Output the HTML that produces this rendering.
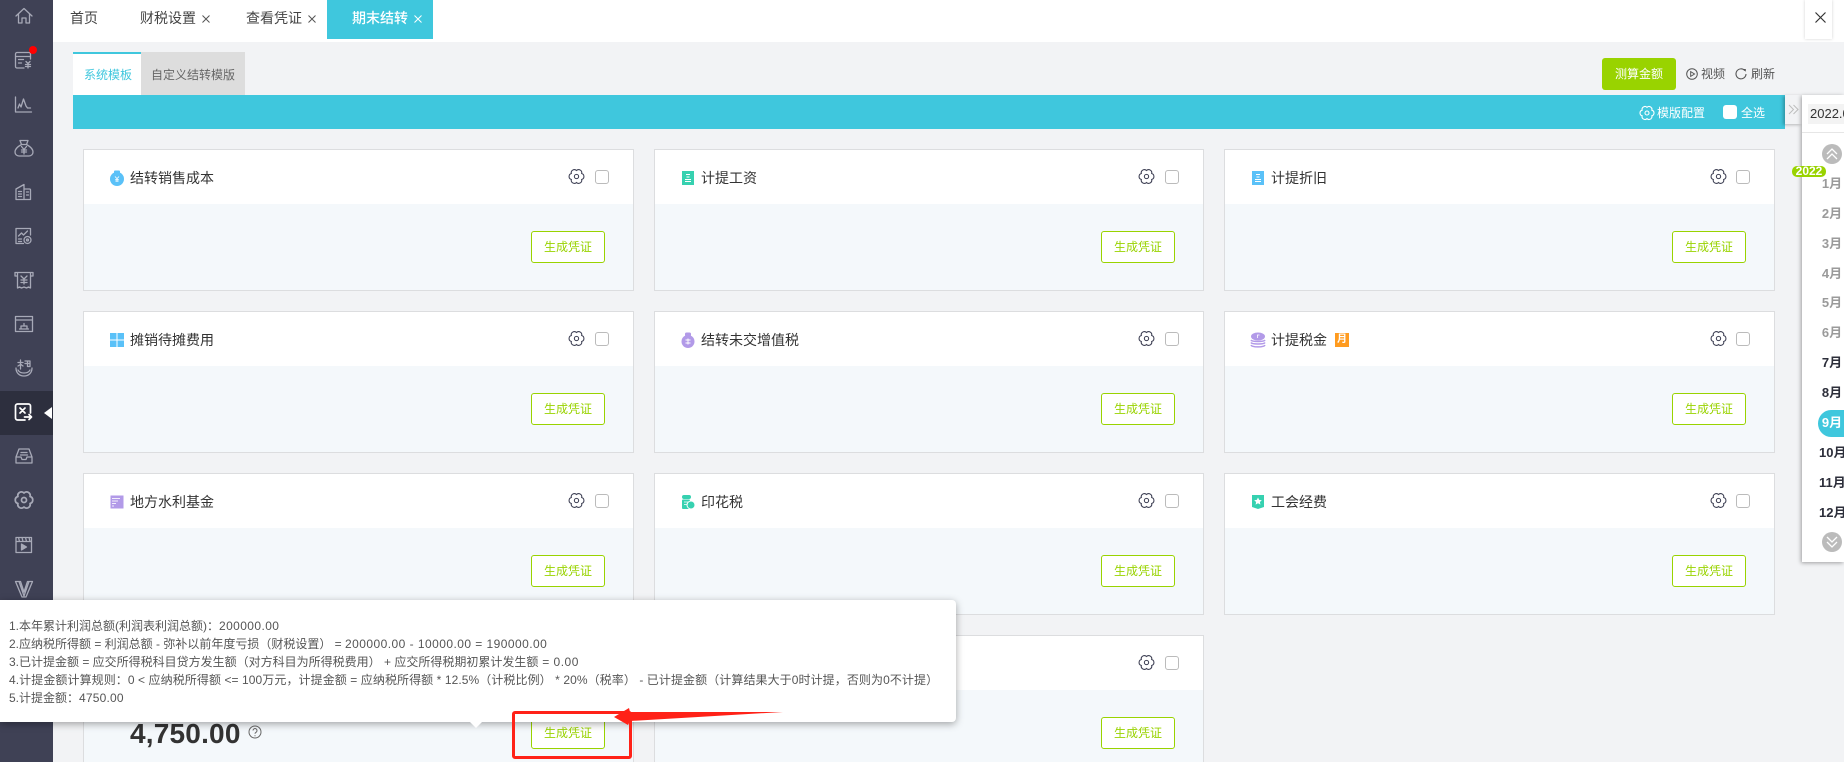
<!DOCTYPE html>
<html lang="zh"><head><meta charset="utf-8"><title>期末结转</title>
<style>
*{box-sizing:border-box}
html,body{margin:0;padding:0;width:1844px;height:762px;overflow:hidden;background:#f2f3f5;font-family:"Liberation Sans","Noto Sans CJK SC",sans-serif;color:#333}
#page{position:relative;width:1844px;height:762px;overflow:hidden;background:#f2f3f5}
.a{position:absolute}
.t{position:absolute;white-space:nowrap;line-height:20px}
#side{left:0;top:0;width:53px;height:762px;background:#3f4155}
#side svg{position:absolute;left:14px;width:20px;height:20px;fill:none;stroke:#a7a9b7;stroke-width:1.3;stroke-linejoin:round;stroke-linecap:round}
.card{position:absolute;width:551px;height:142px;border:1px solid #dcdddf;background:#f4f8fb}
.card .h{position:absolute;left:0;top:0;right:0;height:54px;background:#fff}
.card .n{position:absolute;left:46px;top:18px;font-size:14px;line-height:20px;white-space:nowrap;color:#333}
.card .i{position:absolute;left:25px;top:20px;width:16px;height:16px}
.card .g{position:absolute;right:48px;top:18px;width:17px;height:17px;fill:none;stroke:#3f4155;stroke-width:1}
.card .c{position:absolute;right:24px;top:20px;width:14px;height:14px;border:1px solid #bbb;border-radius:3px;background:#fff}
.card .b{position:absolute;right:28px;top:81px;width:74px;height:32px;border:1px solid #99d300;border-radius:3px;background:#fff;color:#99d300;font-size:12px;line-height:30px;text-align:center}
.c3 .g{right:47px}
.last{height:127px;border-bottom:0}
.m{position:absolute;left:1820px;width:24px;text-align:center;font-size:13px;font-weight:700;line-height:20px;white-space:nowrap}
.w{left:1819px;width:25px;text-align:left;overflow:hidden}
.gr{color:#9a9a9a}.dk{color:#2c2e3a}
.tip{font-size:12px;line-height:18px;color:#555;white-space:nowrap}
.tip i{font-style:normal}
</style></head><body><div id="page">

<!-- top bar -->
<div class="a" style="left:53px;top:0;width:1791px;height:42px;background:#fff"></div>
<div class="a" style="left:327px;top:0;width:106px;height:39px;background:#3fc7dd"></div>
<div class="t" style="left:70px;top:8px;font-size:14px;color:#444">首页</div>
<div class="t" style="left:140px;top:8px;font-size:14px;color:#444">财税设置</div>
<div class="t" style="left:246px;top:8px;font-size:14px;color:#444">查看凭证</div>
<div class="t" style="left:352px;top:8px;font-size:14px;color:#fff;font-weight:500">期末结转</div>
<svg class="a" style="left:202px;top:15px" width="8" height="8" stroke="#555" stroke-width="1"><path d="M.5.5l7 7M7.500.5l-7 7"/></svg>
<svg class="a" style="left:308px;top:15px" width="8" height="8" stroke="#555" stroke-width="1"><path d="M.5.5l7 7M7.500.5l-7 7"/></svg>
<svg class="a" style="left:414px;top:15px" width="8" height="8" stroke="#fff" stroke-width="1"><path d="M.5.5l7 7M7.500.5l-7 7"/></svg>
<div class="a" style="left:1805px;top:0;width:27px;height:39px;background:#fff;box-shadow:0 0 3px rgba(0,0,0,.18)"></div>
<svg class="a" style="left:1815px;top:12px" width="11" height="11" stroke="#333" stroke-width="1.2"><path d="M.5.5l10 10M10.500.5l-10 10"/></svg>

<!-- sub tabs -->
<div class="a" style="left:73px;top:52px;width:68px;height:43px;background:#fff;border-top:2px solid #3fc7dd"></div>
<div class="a" style="left:141px;top:52px;width:104px;height:43px;background:#dddddd"></div>
<div class="t" style="left:84px;top:65px;font-size:12px;color:#3fc7dd">系统模板</div>
<div class="t" style="left:151px;top:65px;font-size:12px;color:#666">自定义结转模版</div>

<div class="a" style="left:1602px;top:58px;width:74px;height:32px;background:#99d300;border-radius:3px;color:#fff;font-size:12px;line-height:32px;text-align:center">测算金额</div>
<svg class="a" style="left:1686px;top:68px" width="12" height="12" fill="none" stroke="#555" stroke-width="1"><circle cx="6" cy="6" r="5.300"/><path d="M4.700 3.600v4.800L8.500 6z"/></svg>
<div class="t" style="left:1701px;top:64px;font-size:12px;color:#555">视频</div>
<svg class="a" style="left:1735px;top:68px" width="12" height="12" fill="none" stroke="#555" stroke-width="1.1"><path d="M9.800 2.600A5 5 0 1 0 11 6"/><path d="M7.800 1h3v2.700z" fill="#555" stroke="none"/></svg>
<div class="t" style="left:1751px;top:64px;font-size:12px;color:#555">刷新</div>

<!-- teal bar -->
<div class="a" style="left:73px;top:95px;width:1712px;height:34px;background:#3fc7dd"></div>
<svg class="a" style="left:1639px;top:105px" width="16" height="16" viewBox="0 0 16 16" fill="none" stroke="#fff" stroke-width="1.100"><use href="#gear"/></svg>
<div class="t" style="left:1657px;top:103px;font-size:12px;color:#fff">模版配置</div>
<div class="a" style="left:1723px;top:105px;width:14px;height:14px;background:#fff;border-radius:3px"></div>
<div class="t" style="left:1741px;top:103px;font-size:12px;color:#fff">全选</div>

<!-- cards -->
<div class="card" style="left:83px;top:149px"><div class="h"></div>
<svg class="i" viewBox="0 0 16 16"><circle cx="8" cy="9" r="7" fill="#5ac1f8"/><rect x="5" y="0.500" width="6" height="3" rx="1" fill="#5ac1f8"/><path d="M6 6.500l2 2.200 2-2.200M8 8.700V12M6.200 9.500h3.600M6.200 11h3.600" stroke="#fff" stroke-width=".8" fill="none"/></svg>
<div class="n">结转销售成本</div><svg class="g" viewBox="0 0 16 16"><use href="#gear"/></svg><div class="c"></div><div class="b">生成凭证</div></div>

<div class="card" style="left:654px;top:149px;width:550px"><div class="h"></div>
<svg class="i" viewBox="0 0 16 16"><rect x="2" y="1" width="12" height="14" fill="#36d1b0"/><path d="M6 4.500h4M6.500 7h3M5 9.500h6M5 11.500h6" stroke="#fff" stroke-width="1"/></svg>
<div class="n">计提工资</div><svg class="g" viewBox="0 0 16 16"><use href="#gear"/></svg><div class="c"></div><div class="b">生成凭证</div></div>

<div class="card c3" style="left:1224px;top:149px"><div class="h"></div>
<svg class="i" viewBox="0 0 16 16"><rect x="2" y="1" width="12" height="14" fill="#5ac1f8"/><path d="M6 4.500h4M6.500 7h3M5 9.500h6M5 11.500h6" stroke="#fff" stroke-width="1"/></svg>
<div class="n">计提折旧</div><svg class="g" viewBox="0 0 16 16"><use href="#gear"/></svg><div class="c"></div><div class="b">生成凭证</div></div>

<div class="card" style="left:83px;top:311px"><div class="h"></div>
<svg class="i" viewBox="0 0 16 16"><path d="M1 1h6.500v6.500H1zM8.500 1H15v6.500H8.500zM1 8.500h6.500V15H1zM8.500 8.500H15V15H8.500z" fill="#5ac1f8"/></svg>
<div class="n">摊销待摊费用</div><svg class="g" viewBox="0 0 16 16"><use href="#gear"/></svg><div class="c"></div><div class="b">生成凭证</div></div>

<div class="card" style="left:654px;top:311px;width:550px"><div class="h"></div>
<svg class="i" viewBox="0 0 16 16"><circle cx="8" cy="9.500" r="6.500" fill="#b29ae8"/><rect x="5" y="0.500" width="6" height="4" rx="1.500" fill="#b29ae8"/><path d="M5.500 8h5M5.500 11h5M8 6.500v6" stroke="#fff" stroke-width=".9"/></svg>
<div class="n">结转未交增值税</div><svg class="g" viewBox="0 0 16 16"><use href="#gear"/></svg><div class="c"></div><div class="b">生成凭证</div></div>

<div class="card c3" style="left:1224px;top:311px"><div class="h"></div>
<svg class="i" viewBox="0 0 16 16"><ellipse cx="8" cy="4.500" rx="7" ry="4" fill="#b29ae8"/><path d="M1 8c1 2 13 2 14 0M1 10.500c1 2 13 2 14 0M1 13c1 2.500 13 2.500 14 0" stroke="#b29ae8" stroke-width="1.500" fill="none"/><path d="M7 3h2.500M7.500 3v3" stroke="#fff" stroke-width=".8"/></svg>
<div class="n">计提税金</div>
<div class="a" style="left:110px;top:21px;width:14px;height:14px;background:#ff9b1f;color:#fff;font-size:10px;line-height:14px;text-align:center;font-weight:700">月</div>
<svg class="g" viewBox="0 0 16 16"><use href="#gear"/></svg><div class="c"></div><div class="b">生成凭证</div></div>

<div class="card" style="left:83px;top:473px"><div class="h"></div>
<svg class="i" viewBox="0 0 16 16"><rect x="1.500" y="1.500" width="13" height="13" fill="#b29ae8"/><path d="M3 4.500h8M3 7h6M3 9.500h4M3 12h2" stroke="#f2eefc" stroke-width="1"/></svg>
<div class="n">地方水利基金</div><svg class="g" viewBox="0 0 16 16"><use href="#gear"/></svg><div class="c"></div><div class="b">生成凭证</div></div>

<div class="card" style="left:654px;top:473px;width:550px"><div class="h"></div>
<svg class="i" viewBox="0 0 16 16"><rect x="2" y="1" width="9" height="4" rx="2" fill="#36d1b0"/><rect x="2" y="5.500" width="8" height="9.500" rx="1" fill="#36d1b0"/><circle cx="11" cy="11" r="4" fill="#36d1b0" stroke="#fff" stroke-width="1"/><path d="M4 8h4M4 10.500h3" stroke="#fff" stroke-width=".8"/></svg>
<div class="n">印花税</div><svg class="g" viewBox="0 0 16 16"><use href="#gear"/></svg><div class="c"></div><div class="b">生成凭证</div></div>

<div class="card c3" style="left:1224px;top:473px"><div class="h"></div>
<svg class="i" viewBox="0 0 16 16"><path d="M2 1h12v12l-6 2-6-2z" fill="#36d1b0"/><path d="M8 3.500l1.200 2.400 2.600.3-1.900 1.800.5 2.600L8 9.300l-2.400 1.300.5-2.600-1.900-1.800 2.600-.3z" fill="#fff"/></svg>
<div class="n">工会经费</div><svg class="g" viewBox="0 0 16 16"><use href="#gear"/></svg><div class="c"></div><div class="b">生成凭证</div></div>

<div class="card last" style="left:83px;top:635px"><div class="h"></div><svg class="g" viewBox="0 0 16 16"><use href="#gear"/></svg><div class="c"></div><div class="b">生成凭证</div></div>
<div class="card last" style="left:654px;top:635px;width:550px"><div class="h"></div><svg class="g" viewBox="0 0 16 16"><use href="#gear"/></svg><div class="c"></div><div class="b">生成凭证</div></div>

<svg width="0" height="0" style="position:absolute"><defs><g id="gear"><path d="M8 2.400A2.900 2.900 0 0 1 12.850 5.200A2.900 2.900 0 0 1 12.850 10.800A2.900 2.900 0 0 1 8 13.600A2.900 2.900 0 0 1 3.150 10.800A2.900 2.900 0 0 1 3.150 5.200A2.900 2.900 0 0 1 8 2.400Z"/><circle cx="8" cy="8" r="2"/></g></defs></svg>

<div class="t" style="left:130px;top:717px;font-size:28px;font-weight:700;line-height:34px;color:#333;letter-spacing:.2px">4,750.00</div>
<svg class="a" style="left:248px;top:725px" width="14" height="14" fill="none" stroke="#666" stroke-width="1"><circle cx="7" cy="7" r="6"/><path d="M5 5.500a2 2 0 1 1 3 1.800c-.7.400-1 .8-1 1.500"/><path d="M7 10.200v1"/></svg>

<!-- sidebar -->
<div id="side" class="a">
<div class="a" style="left:0;top:391px;width:53px;height:44px;background:#2d2f3e"></div>
<svg style="top:6px" viewBox="0 0 20 20"><path d="M2 10L10 2.500l8 7.500M4.500 8.500V17H8v-5h4v5h3.500V8.500"/></svg>
<svg style="top:50px" viewBox="0 0 20 20"><path d="M16.500 9V4A1.500 1.500 0 0 0 15 2.500H3A1.500 1.500 0 0 0 1.500 4v12.500A1.500 1.500 0 0 0 3 18h7M1.500 6.500h15M4.500 9.500h5M4.500 13h3M12 11.500l2 2 2-2M14 13.500V18M11.500 14.500h5M11.500 16.500h5"/></svg>
<svg style="top:95px" viewBox="0 0 20 20"><path d="M1.500 2v15h16M4 13l1.500-4 1.500 3 2.500-8 2.500 7 1.500 2h3"/></svg>
<svg style="top:139px" viewBox="0 0 20 20"><path d="M6 1.500h8l-1.500 4h-5zM7.500 5.500C3 8 1 10.500 1 13c0 2.500 2 4 4 4h10c2 0 4-1.500 4-4 0-2.500-2-5-6.500-7.500M7.500 7.500L10 10.500l2.500-3M10 10.500v4.500M7.500 11h5M7.500 13h5"/></svg>
<svg style="top:182px" viewBox="0 0 20 20"><path d="M2 17.500V7L10 2.500V17.500M10 7h5.500a1 1 0 0 1 1 1v9.500H2M4.500 9.500h3M4.500 12h3M4.500 14.500h3M12.500 10h2M12.500 13h2"/></svg>
<svg style="top:226px" viewBox="0 0 20 20"><path d="M9.500 17.500H2V2.500h14.500V9M4.500 10l3-3 2 2 4-4M4.500 13h3M4.500 15.500h3"/><circle cx="13.500" cy="14" r="3.500"/><circle cx="13.500" cy="14" r="1"/></svg>
<svg style="top:270px" viewBox="0 0 20 20"><path d="M1 2.500h18V6h-2.500M3.500 6H1V2.500M3.500 2.500V18l2-1 2 1 2.500-1 2.500 1 2-1 2 1V2.500M7 6l3 3 3-3M10 9v5M7 10h6M7 12.500h6"/></svg>
<svg style="top:314px" viewBox="0 0 20 20"><path d="M1.500 2.500h17v15h-17zM1.500 6h17M5.500 15h9M7 15v-3h6v3M10 9.500V12"/></svg>
<svg style="top:357px" viewBox="0 0 20 20"><path d="M2 11c0 5 3.500 8 8 8s8-3 8-8M4 13c1 2 3 3 6 3s5-1 6-3M4 5.500h5M6.500 3v9M4 9l2.500-1.500M9 9l-2-1.500M11 4h5v5.500h-2M11 6.500h5M13.500 4v5.500"/></svg>
<svg style="top:402px;stroke:#fff;stroke-width:1.700" viewBox="0 0 20 20"><path d="M11 18H3.500a2 2 0 0 1-2-2V4a2 2 0 0 1 2-2h11a2 2 0 0 1 2 2v7M10.500 15h7M15 12.500l2.500 2.500-2.500 2.500M6 6l5 5M11 6l-5 5"/></svg>
<svg style="top:446px" viewBox="0 0 20 20"><path d="M5 3h10l3 8v6H2v-6zM2 11h5l1 2.500h4l1-2.500h5M7 6.500h6M6.500 9h7"/></svg>
<svg style="top:490px;stroke-width:1.400" viewBox="0 0 16 16"><use href="#gear"/></svg>
<svg style="top:534px" viewBox="0 0 20 20"><path d="M2 3.500h15.500v15H2zM2 7.500h15.500M4.500 3.500l1 4M8 3.500l1 4M11.500 3.500l1 4M15 3.500l1 4"/><path d="M7.500 10v6l5-3z" fill="#a7a9b7"/></svg>
<svg style="top:578px" viewBox="0 0 20 20"><path d="M1.500 3.500h5L10 14l3.500-10.500h5L12 19H8zM5 3.500L10 18l5-14.500"/></svg>
<div class="a" style="left:29px;top:46px;width:8px;height:8px;border-radius:50%;background:#f00"></div>
<div class="a" style="left:44px;top:407px;width:0;height:0;border-top:6px solid transparent;border-bottom:6px solid transparent;border-right:8px solid #fff"></div>
</div>

<!-- right panel -->
<div class="a" style="left:1785px;top:95px;width:17px;height:29px;background:#f2f3f5;box-shadow:-2px 1px 3px rgba(0,0,0,.25)"></div>
<svg class="a" style="left:1788px;top:104px" width="11" height="11" fill="none" stroke="#bdbdbd" stroke-width="1"><path d="M1 1l4.500 4.500L1 10M5.500 1L10 5.500 5.500 10"/></svg>
<div class="a" style="left:1802px;top:95px;width:42px;height:467px;background:#fff;box-shadow:-1px 1px 4px rgba(0,0,0,.35)"></div>
<div class="a" style="left:1802px;top:132px;width:42px;height:1px;background:#e6e6e6"></div>
<div class="a" style="left:1808px;top:104px;width:36px;height:20px;background:#f3f3f3;overflow:hidden;font-size:13px;line-height:20px;color:#333;padding-left:2px;white-space:nowrap">2022.09</div>
<div class="a" style="left:1822px;top:144px;width:20px;height:20px;border-radius:50%;background:#bbb"></div>
<svg class="a" style="left:1826px;top:148px" width="12" height="12" fill="none" stroke="#fff" stroke-width="1.300"><path d="M1 6l5-5 5 5M1 11l5-5 5 5"/></svg>
<div class="a" style="left:1792px;top:166px;width:34px;height:11px;border-radius:5px;background:#99d300;color:#fff;font-size:12px;font-weight:700;line-height:11px;text-align:center">2022</div>
<div class="m gr" style="top:174px">1月</div>
<div class="m gr" style="top:204px">2月</div>
<div class="m gr" style="top:234px">3月</div>
<div class="m gr" style="top:264px">4月</div>
<div class="m gr" style="top:293px">5月</div>
<div class="m gr" style="top:323px">6月</div>
<div class="m dk" style="top:353px">7月</div>
<div class="m dk" style="top:383px">8月</div>
<div class="a" style="left:1818px;top:410px;width:26px;height:27px;border-radius:50% 0 0 50%/50%;background:#3fc7dd"></div>
<div class="m" style="top:413px;color:#fff">9月</div>
<div class="m dk w" style="top:443px">10月</div>
<div class="m dk w" style="top:473px">11月</div>
<div class="m dk w" style="top:503px">12月</div>
<div class="a" style="left:1822px;top:532px;width:20px;height:20px;border-radius:50%;background:#bbb"></div>
<svg class="a" style="left:1826px;top:536px" width="12" height="12" fill="none" stroke="#fff" stroke-width="1.300"><path d="M1 1l5 5 5-5M1 6l5 5 5-5"/></svg>

<!-- tooltip -->
<div class="a" style="left:0;top:600px;width:956px;height:122px;background:#fff;border-radius:0 4px 4px 0;box-shadow:0 2px 8px rgba(0,0,0,.35)"></div>
<div class="a" style="left:470px;top:722px;width:0;height:0;border-left:6px solid transparent;border-right:6px solid transparent;border-top:6px solid #fff"></div>
<div class="t tip" style="left:9px;top:617px">1.本年累计利润总额(利润表利润总额)：<i style="letter-spacing:.4px">200000.00</i></div>
<div class="t tip" style="left:9px;top:635px">2.应纳税所得额 = 利润总额 - 弥补以前年度亏损（财税设置） = <i style="letter-spacing:.45px">200000.00 - 10000.00 = 190000.00</i></div>
<div class="t tip" style="left:9px;top:653px">3.已计提金额 = 应交所得税科目贷方发生额（对方科目为所得税费用） + 应交所得税期初累计发生额<i style="letter-spacing:.5px"> = 0.00</i></div>
<div class="t tip" style="left:9px;top:671px;letter-spacing:.08px">4.计提金额计算规则：0 &lt; 应纳税所得额 &lt;= 100万元，计提金额 = 应纳税所得额 * 12.5%（计税比例） * 20%（税率） - 已计提金额（计算结果大于0时计提，否则为0不计提）</div>
<div class="t tip" style="left:9px;top:689px">5.计提金额：<i style="letter-spacing:.2px">4750.00</i></div>

<!-- annotations -->
<div class="a" style="left:512px;top:711px;width:120px;height:48px;border:3px solid #ff2218;border-radius:3px"></div>
<svg class="a" style="left:0;top:0" width="1844" height="762"><polygon points="614,717 629,708 630,712 783,712 630,721 628,725" fill="#ff2218"/></svg>
</div></body></html>
